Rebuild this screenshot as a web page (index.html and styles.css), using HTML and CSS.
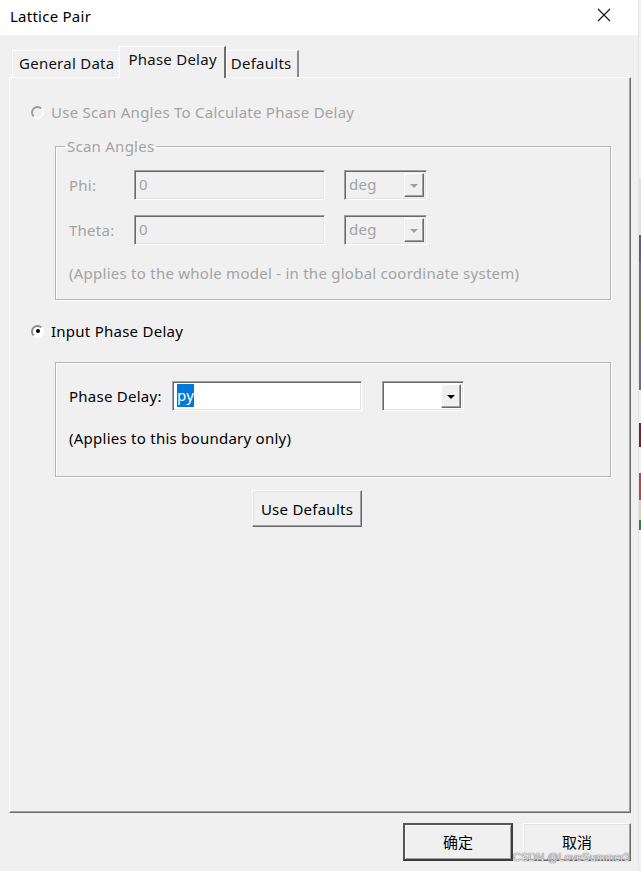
FILE: index.html
```html
<!DOCTYPE html>
<html lang="en">
<head>
    <meta charset="UTF-8">
    <meta name="viewport" content="width=device-width, initial-scale=1.0">
    <title>Lattice Pair</title>
    <link rel="stylesheet" href="styles.css">
</head>
<body>
    <div class="window">
        <div class="dialog">
            <div class="titlebar">
                <span class="title">Lattice Pair</span>
                <svg class="close" width="14" height="14" viewBox="0 0 14 14">
                    <path d="M1 1 L13 13 M13 1 L1 13" stroke="#111" stroke-width="1.1" fill="none"/>
                </svg>
            </div>
            <div class="client">
                <div class="tabs">
                    <div class="tab tab-first">General Data</div>
                    <div class="tab tab-active">Phase Delay</div>
                    <div class="tab">Defaults</div>
                </div>
                <div class="tab-panel">
                    <div class="radio disabled">
                        <span class="radio-box"></span>
                        <span>Use Scan Angles To Calculate Phase Delay</span>
                    </div>

                    <fieldset class="group group-scan disabled">
                        <legend>Scan Angles</legend>
                        <div class="field-row">
                            <span class="field-label">Phi:</span>
                            <div class="textbox textbox-scan">0</div>
                            <div class="combo combo-scan">
                                <span class="combo-value">deg</span>
                                <span class="combo-btn"><span class="arrow"></span></span>
                            </div>
                        </div>
                        <div class="field-row row-gap">
                            <span class="field-label">Theta:</span>
                            <div class="textbox textbox-scan">0</div>
                            <div class="combo combo-scan">
                                <span class="combo-value">deg</span>
                                <span class="combo-btn"><span class="arrow"></span></span>
                            </div>
                        </div>
                        <div class="note note-scan">(Applies to the whole model - in the global coordinate system)</div>
                    </fieldset>

                    <div class="radio radio-second">
                        <span class="radio-box checked"></span>
                        <span>Input Phase Delay</span>
                    </div>

                    <div class="group group-input">
                        <div class="field-row">
                            <span class="field-label label-wide">Phase Delay:</span>
                            <div class="textbox textbox-phase"><span class="selected">py</span></div>
                            <div class="combo combo-unit">
                                <span class="combo-value"></span>
                                <span class="combo-btn"><span class="arrow"></span></span>
                            </div>
                        </div>
                        <div class="note note-input">(Applies to this boundary only)</div>
                    </div>

                    <div class="btn btn-defaults">Use Defaults</div>
                </div>

                <div class="footer">
                    <div class="btn btn-footer btn-default">确定</div>
                    <div class="btn btn-footer btn-cancel">取消</div>
                    <span class="watermark">CSDN @LoveSummer3</span>
                </div>
            </div>
        </div>
        <div class="edge"></div>
    </div>
</body>
</html>
```
FILE: styles.css
```css
body {
    margin: 0;
    background: #f0f0f0;
    font-family: "Noto Sans", "Noto Sans CJK SC", sans-serif;
    font-size: 15px;
    line-height: 20px;
    letter-spacing: 0.25px;
    color: #000;
}

.window {
    display: flex;
    width: 641px;
    height: 871px;
    overflow: hidden;
}

.dialog {
    width: 638px;
    background: #f0f0f0;
}

.edge {
    width: 3px;
    background: linear-gradient(to right, #e4e4e4 0, #e4e4e4 1px, transparent 1px);
}

.edge::after {
    content: "";
    display: block;
    margin-left: 1px;
    height: 871px;
    background: linear-gradient(to bottom,
        #f3f3f3 0, #f3f3f3 178px,
        #e4e4c8 178px, #e4e4c8 235px,
        #5a5f9a 235px, #5a5f9a 262px,
        #6d7090 262px, #6d7090 295px,
        #7b7a3a 295px, #7b7a3a 345px,
        #6a6aa8 345px, #6a6aa8 390px,
        #f0f0f0 390px, #f0f0f0 423px,
        #8a1c1c 423px, #8a1c1c 447px,
        #f0f0f0 447px, #f0f0f0 473px,
        #d23c3c 473px, #d23c3c 500px,
        #e0d0c0 500px, #e0d0c0 520px,
        #1a9a1a 520px, #1a9a1a 530px,
        #f3f3f3 530px);
}

/* title bar */
.titlebar {
    height: 35px;
    background: #fff;
    display: flex;
    align-items: center;
    justify-content: space-between;
    padding: 0 27px 0 10px;
}

.title {
    font-size: 15px;
    margin-top: -4px;
}

.close {
    margin-top: -5px;
}

/* tabs */
.client {
    padding: 11px 7px 0 9px;
}

.tabs {
    display: flex;
    align-items: flex-end;
    height: 31px;
    padding-left: 3px;
    position: relative;
    z-index: 1;
}

.tab {
    height: 27px;
    box-sizing: border-box;
    padding: 2px 5px 0 4px;
    border-top: 1px solid #fff;
    border-left: 1px solid #fff;
    border-right: 2px solid #8a8a8a;
    background: #f0f0f0;
    color: #111;
}

.tab-first {
    border-right: none;
    padding: 2px 5px 0 6px;
}

.tab-active {
    height: 32px;
    margin-bottom: -1px;
    padding: 2px 7px 0 8px;
    border-right: 2px solid #6e6e6e;
}

.tab-panel {
    height: 736px;
    box-sizing: border-box;
    border-top: 1px solid #fff;
    border-left: 1px solid #fff;
    border-right: 1px solid #6e6e6e;
    border-bottom: 1px solid #6e6e6e;
    box-shadow: inset -1px -1px 0 #a0a0a0;
    padding: 24px 0 0 0;
}

/* radios */
.radio {
    display: flex;
    align-items: center;
    height: 20px;
    padding-left: 21px;
    gap: 7px;
}

.radio-box {
    width: 9px;
    height: 9px;
    border-radius: 50%;
    border: 2px solid;
    border-color: #8c8c8c #fff #fff #8c8c8c;
    background: #fff;
    display: flex;
    align-items: center;
    justify-content: center;
}

.disabled .radio-box {
    background: #f0f0f0;
    border-color: #9c9c9c #fff #fff #9c9c9c;
}

.radio-box.checked::after {
    content: "";
    width: 4px;
    height: 4px;
    border-radius: 50%;
    background: #000;
}

.disabled {
    color: #a3a3a3;
}

.radio-second {
    margin-top: 21px;
}

/* group boxes */
.group {
    margin: 0 0 0 45px;
    width: 556px;
    box-sizing: border-box;
    border: 1px solid #b4b4b4;
    box-shadow: 1px 1px 0 #fff, inset 1px 1px 0 #fff;
    min-width: 0;
}

.group-scan {
    margin-top: 14px;
    padding: 14px 0 16px 13px;
}

.group-scan legend {
    padding: 0 2px;
    margin-left: -4px;
    line-height: 20px;
}

.group-input {
    margin-top: 21px;
    padding: 18px 0 28px 13px;
}

.field-row {
    display: flex;
    align-items: center;
    height: 30px;
}

.row-gap {
    margin-top: 15px;
}

.field-label {
    width: 65px;
    flex: none;
}

.label-wide {
    width: 103px;
}

.note-scan {
    margin-top: 18px;
}

.note-input {
    margin-top: 17px;
}

/* inputs */
.textbox {
    height: 30px;
    box-sizing: border-box;
    border: 1px solid;
    border-color: #a0a0a0 #fff #fff #a0a0a0;
    box-shadow: inset 1px 1px 0 #696969, inset -1px -1px 0 #e3e3e3;
    padding: 3px 0 0 4px;
    background: #fff;
}

.textbox-scan {
    width: 191px;
    background: #f0f0f0;
    color: #a3a3a3;
}

.textbox-phase {
    width: 190px;
}

.selected {
    background: #0078d7;
    color: #fff;
    padding: 1px 0 2px 0;
}

.combo {
    height: 30px;
    box-sizing: border-box;
    display: flex;
    border: 1px solid;
    border-color: #a0a0a0 #fff #fff #a0a0a0;
    box-shadow: inset 1px 1px 0 #696969, inset -1px -1px 0 #e3e3e3;
    padding: 2px;
    background: #fff;
}

.combo-scan {
    width: 83px;
    margin-left: 19px;
    background: #f0f0f0;
}

.combo-unit {
    width: 82px;
    margin-left: 20px;
}

.combo-value {
    flex: 1;
    padding: 1px 0 0 2px;
}

.combo-btn {
    width: 20px;
    box-sizing: border-box;
    border: 1px solid;
    border-color: #fff #696969 #696969 #fff;
    box-shadow: inset -1px -1px 0 #a0a0a0;
    background: #f0f0f0;
    display: flex;
    align-items: center;
    justify-content: center;
}

.arrow {
    width: 0;
    height: 0;
    border-left: 4px solid transparent;
    border-right: 4px solid transparent;
    border-top: 4px solid #000;
    margin-top: 1px;
}

.disabled .arrow {
    border-top-color: #a0a0a0;
}

/* buttons */
.btn {
    box-sizing: border-box;
    display: flex;
    align-items: center;
    justify-content: center;
    border: 1px solid;
    border-color: #fff #696969 #696969 #fff;
    box-shadow: inset -1px -1px 0 #a0a0a0, inset 1px 1px 0 #e3e3e3;
    background: #f0f0f0;
}

.btn-defaults {
    width: 110px;
    height: 37px;
    margin: 13px 0 0 242px;
}

.footer {
    display: flex;
    justify-content: flex-end;
    gap: 10px;
    margin-top: 10px;
    position: relative;
}

.btn-footer {
    height: 38px;
    font-family: "Noto Sans CJK SC", sans-serif;
    font-size: 15px;
    letter-spacing: 0;
}

.btn-default {
    width: 110px;
    border: 2px solid;
    border-color: #555 #3c3c3c #3c3c3c #555;
    box-shadow: inset 1px 1px 0 #fff, inset -1px -1px 0 #a0a0a0;
}

.btn-cancel {
    width: 108px;
}

.watermark {
    position: absolute;
    right: 1px;
    top: 28px;
    font-family: "Liberation Sans", sans-serif;
    font-size: 11px;
    line-height: 12px;
    letter-spacing: 0;
    color: #e6e6e6;
    text-shadow: 0 0 1px #666, 0 0 1px #666;
}
```
